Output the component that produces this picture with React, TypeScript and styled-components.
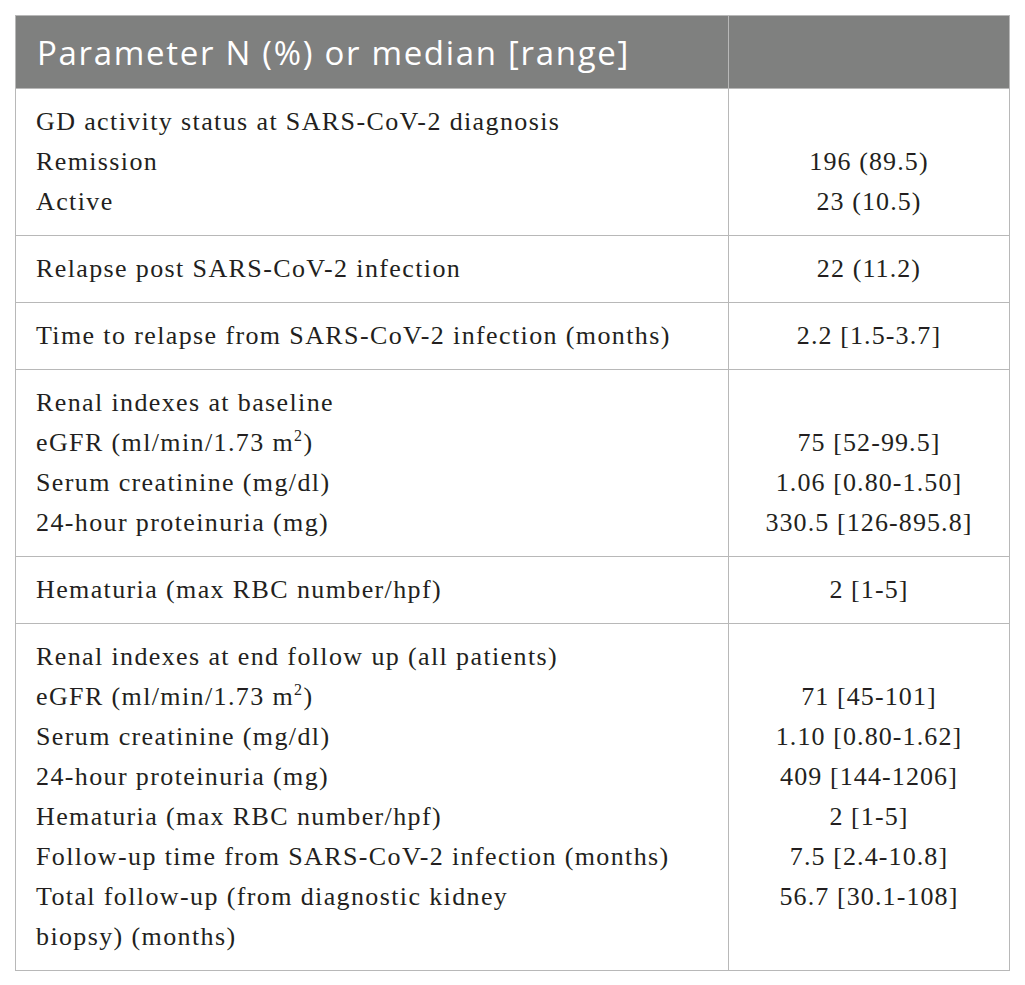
import React from "react";
import styled, { createGlobalStyle } from "styled-components";

const Global = createGlobalStyle`
  html, body { margin: 0; padding: 0; background: #ffffff; }
`;

const Page = styled.div`
  padding: 15px 16px 16px 15px;
`;

const Table = styled.table`
  width: 994px;
  border-collapse: collapse;
  table-layout: fixed;
  border: 1px solid #b8b8b8;
`;

const HeadCell = styled.th`
  background: #7f807f;
  color: #ffffff;
  font-family: "Open Sans", "Liberation Sans", sans-serif;
  font-weight: 400;
  font-size: 33px;
  letter-spacing: 1.7px;
  text-align: left;
  height: 73px;
  padding: 0 0 0 21px;
  box-sizing: border-box;
  border-right: 1px solid #b8b8b8;
  border-bottom: 1px solid #b8b8b8;
  white-space: nowrap;
  &:last-child { border-right: none; }
`;

const Cell = styled.td<{ $center?: boolean }>`
  font-family: "Liberation Serif", "Times New Roman", serif;
  font-size: 26px;
  letter-spacing: ${(p) => (p.$center ? "1.1px" : "1.38px")};
  line-height: 40px;
  color: #231f20;
  vertical-align: top;
  text-align: ${(p) => (p.$center ? "center" : "left")};
  padding: 13px 10px 13px ${(p) => (p.$center ? "10px" : "20px")};
  border: 1px solid #b8b8b8;
`;

const Line = styled.div`
  min-height: 40px;
  white-space: nowrap;
`;

const Sup = styled.sup`
  font-size: 16px;
  line-height: 0;
  vertical-align: 10px;
`;

type Row = { left: React.ReactNode[]; right: React.ReactNode[] };

const m2 = (
  <>
    eGFR (ml/min/1.73 m<Sup>2</Sup>)
  </>
);

const rows: Row[] = [
  {
    left: ["GD activity status at SARS-CoV-2 diagnosis", "Remission", "Active"],
    right: ["", "196 (89.5)", "23 (10.5)"],
  },
  { left: ["Relapse post SARS-CoV-2 infection"], right: ["22 (11.2)"] },
  {
    left: ["Time to relapse from SARS-CoV-2 infection (months)"],
    right: ["2.2 [1.5-3.7]"],
  },
  {
    left: [
      "Renal indexes at baseline",
      m2,
      "Serum creatinine (mg/dl)",
      "24-hour proteinuria (mg)",
    ],
    right: ["", "75 [52-99.5]", "1.06 [0.80-1.50]", "330.5 [126-895.8]"],
  },
  { left: ["Hematuria (max RBC number/hpf)"], right: ["2 [1-5]"] },
  {
    left: [
      "Renal indexes at end follow up (all patients)",
      m2,
      "Serum creatinine (mg/dl)",
      "24-hour proteinuria (mg)",
      "Hematuria (max RBC number/hpf)",
      "Follow-up time from SARS-CoV-2 infection (months)",
      "Total follow-up (from diagnostic kidney",
      "biopsy) (months)",
    ],
    right: [
      "",
      "71 [45-101]",
      "1.10 [0.80-1.62]",
      "409 [144-1206]",
      "2 [1-5]",
      "7.5 [2.4-10.8]",
      "56.7 [30.1-108]",
      "",
    ],
  },
];

export default function App() {
  return (
    <>
      <Global />
      <Page>
        <Table>
          <colgroup>
            <col style={{ width: 713 }} />
            <col style={{ width: 281 }} />
          </colgroup>
          <thead>
            <tr>
              <HeadCell>Parameter N (%) or median [range]</HeadCell>
              <HeadCell />
            </tr>
          </thead>
          <tbody>
            {rows.map((row, i) => (
              <tr key={i}>
                <Cell>
                  {row.left.map((l, j) => (
                    <Line key={j}>{l}</Line>
                  ))}
                </Cell>
                <Cell $center>
                  {row.right.map((l, j) => (
                    <Line key={j}>{l}</Line>
                  ))}
                </Cell>
              </tr>
            ))}
          </tbody>
        </Table>
      </Page>
    </>
  );
}
